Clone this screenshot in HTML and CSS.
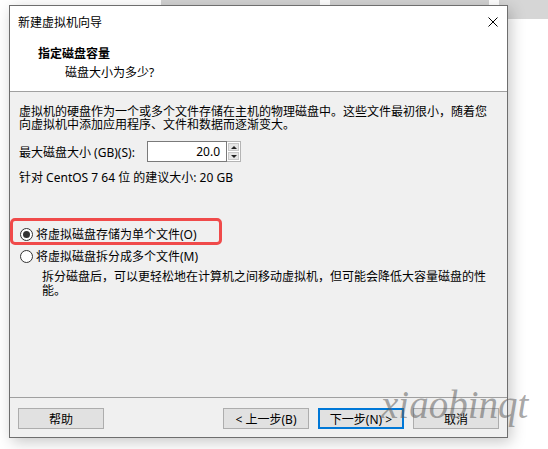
FILE: index.html
```html
<!-- new vm wizard: disk capacity step -->
<html>
  <head>
    <meta http-equiv="content-type" content="text/html;charset=UTF8">
    <link rel="stylesheet" href="styles.css">
    <title>新建虚拟机向导</title>
  </head>
  <body>
    <div class="desk">
      <!-- stuff behind the dialog -->
      <div class="backdrop">
        <span class="tab"></span>
        <span class="tab"></span>
        <span class="tab corner"></span>
      </div>

      <div class="window">
        <div class="titlebar">
          <span>新建虚拟机向导</span>
          <svg class="close" width="10" height="10" viewBox="0 0 10 10">
            <path d="M0.5 0.5 L9.5 9.5 M9.5 0.5 L0.5 9.5" stroke="#000" stroke-width="1" fill="none"/>
          </svg>
        </div>

        <div class="header">
          <div class="header_title">指定磁盘容量</div>
          <div class="header_sub">磁盘大小为多少?</div>
        </div>

        <div class="content">
          <p class="intro">虚拟机的硬盘作为一个或多个文件存储在主机的物理磁盘中。这些文件最初很小，随着您向虚拟机中添加应用程序、文件和数据而逐渐变大。</p>

          <div class="size_row">
            <label class="size_label">最大磁盘大小 (GB)(S):</label>
            <div class="spin_input">20.0</div>
            <div class="spin_btns">
              <span class="spin_up"></span>
              <span class="spin_down"></span>
            </div>
          </div>

          <div class="hint">针对 CentOS 7 64 位 的建议大小: 20 GB</div>

          <div class="option marked">
            <span class="radio checked"></span>
            <span>将虚拟磁盘存储为单个文件(O)</span>
          </div>
          <div class="option">
            <span class="radio"></span>
            <span>将虚拟磁盘拆分成多个文件(M)</span>
          </div>
          <p class="option_desc">拆分磁盘后，可以更轻松地在计算机之间移动虚拟机，但可能会降低大容量磁盘的性能。</p>
        </div>

        <div class="footer">
          <button class="btn">帮助</button>
          <span class="spacer"></span>
          <button class="btn">&lt; 上一步(B)</button>
          <button class="btn default">下一步(N) &gt;</button>
          <button class="btn">取消</button>
        </div>
      </div>

      <div class="watermark">xiaobinqt</div>
    </div>
  </body>
</html>
```

FILE: styles.css
```css
body{
  margin: 0;
  background: #fff;
  font-family: "Noto Sans", "Noto Sans CJK SC", sans-serif;
  font-size: 12px;
  color: #000;
}
.desk{
  position: relative;
  width: 548px;
  height: 449px;
  overflow: hidden;
}

/* grey shapes peeking out above the dialog */
.backdrop{
  display: flex;
  height: 5px;
}
.tab{
  flex: none;
  height: 5px;
  width: 159px;
  background: #d2d2d2;
}
.tab:first-child{
  margin-left: 161px;
}
.tab + .tab{
  margin-left: 10px;
}
.tab.corner{
  width: 49px;
  height: 19px;
  background: #d6d6d6;
}

.window{
  position: relative;
  z-index: 1;
  margin-left: 9px;
  width: 499px;
  box-sizing: border-box;
  border: 1px solid #6e6e6e;
  background: #f0f0f0;
  box-shadow: 3px 4px 14px rgba(0,0,0,0.22);
}

.titlebar{
  height: 32px;
  display: flex;
  align-items: center;
  justify-content: space-between;
  padding: 0 9px 0 8px;
  background: #fff;
}
.close{
  display: block;
}

.header{
  height: 54px;
  box-sizing: border-box;
  padding: 8px 0 0 28px;
  background: #fff;
  border-bottom: 1px solid #a0a0a0;
}
.header_title{
  font-weight: bold;
  line-height: 16px;
}
.header_sub{
  margin-top: 3px;
  padding-left: 27px;
  line-height: 16px;
}

.content{
  height: 305px;
  box-sizing: border-box;
  padding: 13px 0 0 9px;
}
.intro{
  margin: 0;
  width: 472px;
  line-height: 13px;
}

.size_row{
  display: flex;
  align-items: center;
  margin-top: 10px;
  height: 21px;
}
.size_label{
  width: 128px;
}
.spin_input{
  width: 80px;
  height: 21px;
  box-sizing: border-box;
  border: 1px solid #7a7a7a;
  background: #fff;
  text-align: right;
  padding-right: 6px;
  line-height: 19px;
}
.spin_btns{
  display: flex;
  flex-direction: column;
  width: 14px;
  height: 21px;
  box-sizing: border-box;
  border: 1px solid #b4b4b4;
  border-left: none;
  background: #fff;
  padding: 1px;
  gap: 1px;
}
.spin_up,
.spin_down{
  flex: 1;
  display: flex;
  align-items: center;
  justify-content: center;
  background: #e6e6e6;
  border: 1px solid #c8c8c8;
  box-sizing: border-box;
}
.spin_up::after{
  content: "";
  border-left: 3px solid transparent;
  border-right: 3px solid transparent;
  border-bottom: 3px solid #222;
}
.spin_down::after{
  content: "";
  border-left: 3px solid transparent;
  border-right: 3px solid transparent;
  border-top: 3px solid #222;
}

.hint{
  margin-top: 8px;
  line-height: 16px;
}

.option{
  position: relative;
  display: flex;
  align-items: center;
  height: 22px;
  padding-left: 1px;
}
.option.marked{
  margin-top: 37px;
}
/* red highlight box drawn over the first choice */
.option.marked::after{
  content: "";
  position: absolute;
  left: -9px;
  top: -5px;
  width: 212px;
  height: 27px;
  box-sizing: border-box;
  border: 3px solid #f04a4a;
  border-radius: 5px;
}
.radio{
  width: 13px;
  height: 13px;
  box-sizing: border-box;
  border: 1px solid #333;
  border-radius: 50%;
  background: #fff;
  margin-right: 3px;
  display: flex;
  align-items: center;
  justify-content: center;
}
.radio.checked::after{
  content: "";
  width: 7px;
  height: 7px;
  border-radius: 50%;
  background: #333;
}
.option_desc{
  margin: 3px 0 0 23px;
  width: 448px;
  line-height: 14px;
}

.footer{
  display: flex;
  gap: 9px;
  border-top: 1px solid #a0a0a0;
  padding: 10px 8px 8px 8px;
}
.spacer{
  flex: 1;
}
.btn{
  width: 86px;
  height: 21px;
  box-sizing: border-box;
  padding: 0;
  border: 1px solid #adadad;
  background: #e1e1e1;
  font-family: inherit;
  font-size: 12px;
  color: #000;
}
.btn.default{
  border: 2px solid #0078d7;
}

.watermark{
  position: absolute;
  z-index: 2;
  left: 381px;
  top: 385px;
  font-family: "Liberation Serif", serif;
  font-style: italic;
  font-size: 39px;
  line-height: 39px;
  color: rgba(95,95,95,0.55);
}
```
